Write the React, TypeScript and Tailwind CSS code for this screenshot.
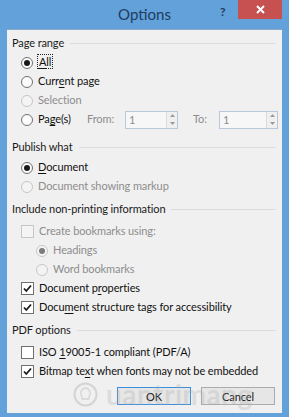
import React from 'react';

const FONT = { fontFamily: 'Lato, "Open Sans", sans-serif' };

// Radio in the Windows 8 look
function Radio({ checked = false, disabled = false }: { checked?: boolean; disabled?: boolean }) {
  return (
    <svg width="12" height="12" viewBox="0 0 12 12" className="shrink-0">
      <circle cx="6" cy="6" r="5.5" fill={disabled ? '#f4f4f4' : '#fcfcfc'} stroke={disabled ? '#c6c6c6' : '#707070'} strokeWidth="1" />
      {checked && <circle cx="6" cy="6" r="3" fill={disabled ? '#7c7c7c' : '#1a1a1a'} />}
    </svg>
  );
}

function Check({ checked = false, disabled = false }: { checked?: boolean; disabled?: boolean }) {
  return (
    <svg width="13" height="13" viewBox="0 0 13 13" className="shrink-0">
      <rect x="0.5" y="0.5" width="12" height="12" fill={disabled ? '#f4f4f4' : '#ffffff'} stroke={disabled ? '#c6c6c6' : '#707070'} />
      {checked && <path d="M3 6.5 L5.3 9 L10 3.5" fill="none" stroke="#1a1a1a" strokeWidth="1.8" />}
    </svg>
  );
}

function Header({ title, className = '' }: { title: string; className?: string }) {
  return (
    <div className={`flex items-center h-[19px] pl-[5px] pr-[6px] gap-[6px] ${className}`}>
      <span className="text-[#1a1a1a] whitespace-nowrap">{title}</span>
      <div className="flex-1 h-px bg-[#dcdcdc]" />
    </div>
  );
}

function Row({
  children,
  control,
  disabled = false,
  indent = false,
  className = '',
}: {
  children: React.ReactNode;
  control: React.ReactNode;
  disabled?: boolean;
  indent?: boolean;
  className?: string;
}) {
  return (
    <div className={`flex items-center h-[19px] gap-[5px] ${indent ? 'pl-[29px]' : 'pl-[14px]'} ${disabled ? 'text-[#8d8d8d]' : 'text-[#111]'} ${className}`}>
      {control}
      <span className="whitespace-nowrap">{children}</span>
    </div>
  );
}

function Spin({ width }: { width: string }) {
  return (
    <div className={`flex h-[18px] ${width} border border-[#b9c7da] bg-[#f7f7f7]`}>
      <span className="flex-1 pl-[3px] text-[#8d8d8d] leading-[16px]">1</span>
      <div className="w-[11px] flex flex-col border-l border-[#dcdcdc] bg-[#f0f0f0]">
        <div className="flex-1 flex items-center justify-center">
          <svg width="5" height="3" viewBox="0 0 5 3"><path d="M0 3 L2.5 0 L5 3 Z" fill="#9a9a9a" /></svg>
        </div>
        <div className="flex-1 flex items-center justify-center">
          <svg width="5" height="3" viewBox="0 0 5 3"><path d="M0 0 L2.5 3 L5 0 Z" fill="#9a9a9a" /></svg>
        </div>
      </div>
    </div>
  );
}

export default function App() {
  return (
    <div className="w-[289px] h-[417px] bg-[#62a1da] flex flex-col text-[11px] tracking-[-0.1px] overflow-hidden" style={FONT}>
      {/* title bar */}
      <div className="relative h-[29px] shrink-0 flex items-start justify-center">
        <span className="mt-[3px] text-[15px] tracking-normal text-[#1f3c60]">Options</span>
        <span className="absolute left-[220px] top-[3px] text-[12px] font-bold text-[#1f3c60]">?</span>
        <div className="absolute left-[238px] top-0 w-[44px] h-[19px] bg-[#c75050] flex items-center justify-center">
          <svg width="9" height="9" viewBox="0 0 9 9">
            <path d="M1 1 L8 8 M8 1 L1 8" stroke="#ffffff" strokeWidth="2" />
          </svg>
        </div>
      </div>

      {/* body */}
      <div className="relative mx-[7px] mb-[4px] flex-1 bg-[#f0f0f0] border-t border-[#8aa9c8] flex flex-col pt-[4px]">
        <Header title="Page range" />
        <Row control={<Radio checked />}>
          <span className="outline outline-1 outline-dotted outline-[#222] px-[1px]">
            <u className="underline-offset-[2px]">A</u>ll
          </span>
        </Row>
        <Row control={<Radio />}>
          Curr<u className="underline-offset-[2px]">e</u>nt page
        </Row>
        <Row control={<Radio disabled />} disabled>
          Selection
        </Row>
        <div className="flex items-center h-[19px] pl-[14px] text-[#111]">
          <Radio />
          <span className="ml-[5px] w-[43px] whitespace-nowrap">
            Pa<u className="underline-offset-[2px]">g</u>e(s)
          </span>
          <span className="ml-[6px] w-[38px] text-[#8d8d8d]">From:</span>
          <Spin width="w-[53px]" />
          <span className="ml-[15px] w-[26px] text-[#8d8d8d]">To:</span>
          <Spin width="w-[59px]" />
        </div>

        <Header title="Publish what" className="mt-[9px]" />
        <Row control={<Radio checked />} className="mt-[1px]">
          <u className="underline-offset-[2px]">D</u>ocument
        </Row>
        <Row control={<Radio disabled />} disabled>
          Document showing markup
        </Row>

        <Header title="Include non-printing information" className="mt-[4px]" />
        <Row control={<Check disabled />} disabled className="mt-[3px]">
          Create bookmarks using:
        </Row>
        <Row control={<Radio checked disabled />} disabled indent>
          Headings
        </Row>
        <Row control={<Radio disabled />} disabled indent>
          Word bookmarks
        </Row>
        <Row control={<Check checked />}>
          Document p<u className="underline-offset-[2px]">r</u>operties
        </Row>
        <Row control={<Check checked />}>
          Docu<u className="underline-offset-[2px]">m</u>ent structure tags for accessibility
        </Row>

        <Header title="PDF options" className="mt-[4px]" />
        <Row control={<Check />} className="mt-[3px]">
          ISO <u className="underline-offset-[2px]">1</u>9005-1 compliant (PDF/A)
        </Row>
        <Row control={<Check checked />}>
          Bitmap te<u className="underline-offset-[2px]">x</u>t when fonts may not be embedded
        </Row>

        <div className="flex justify-end gap-[10px] pr-[7px] mt-[6px]">
          <button className="w-[74px] h-[18px] border border-[#3c8fdc] bg-[#e6e6e6] text-[#111] leading-none">OK</button>
          <button className="w-[74px] h-[18px] border border-[#acacac] bg-[#e6e6e6] text-[#111] leading-none">Cancel</button>
        </div>

        {/* watermark */}
        <div className="absolute left-[66px] top-[350px] flex items-center gap-[8px] pointer-events-none text-[rgba(170,170,170,0.3)]">
          <svg width="25" height="25" viewBox="0 0 25 25">
            <circle cx="12.5" cy="12.5" r="11" fill="none" stroke="rgba(170,170,170,0.4)" strokeWidth="2" />
            <path d="M9 15 Q7 12 8 9.5 Q10 6 12.5 6 Q15 6 17 9.5 Q18 12 16 15 L16 17 L9 17 Z" fill="none" stroke="rgba(170,170,170,0.4)" strokeWidth="1.3" />
          </svg>
          <span className="text-[28px] font-bold tracking-[0.5px] leading-none">uantrimang</span>
        </div>
      </div>
    </div>
  );
}
